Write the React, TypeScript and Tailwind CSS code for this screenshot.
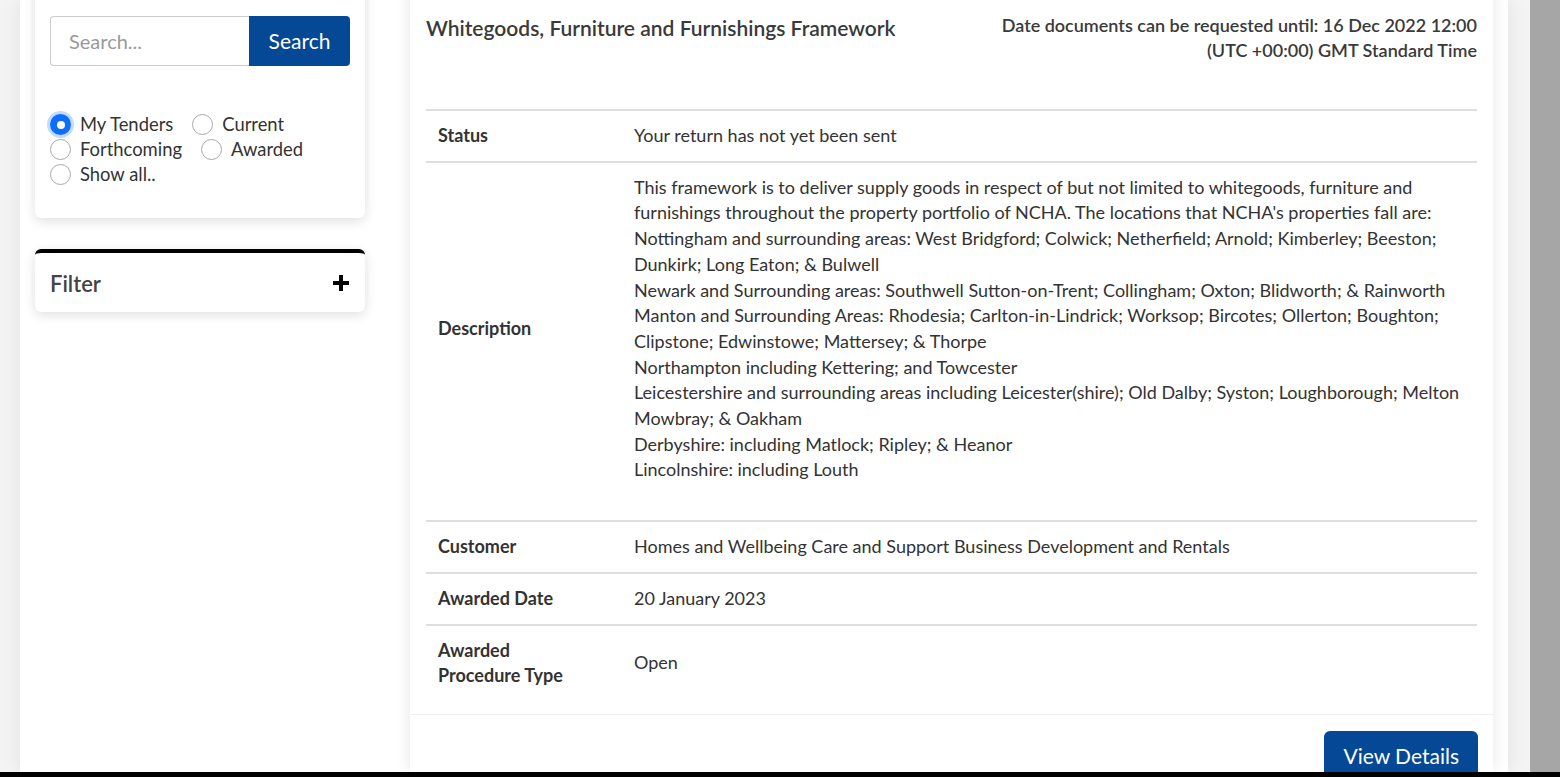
import React from 'react';

const rows: { label: string; value: React.ReactNode; extra?: string }[] = [
  { label: 'Status', value: 'Your return has not yet been sent' },
  {
    label: 'Description',
    extra: 'pb-[37px]',
    value: (
      <>
        This framework is to deliver supply goods in respect of but not limited to whitegoods, furniture and furnishings
        throughout the property portfolio of NCHA. The locations that NCHA's properties fall are:
        <br />
        Nottingham and surrounding areas: West Bridgford; Colwick; Netherfield; Arnold; Kimberley; Beeston; Dunkirk; Long
        Eaton; &amp; Bulwell
        <br />
        Newark and Surrounding areas: Southwell Sutton-on-Trent; Collingham; Oxton; Blidworth; &amp; Rainworth
        <br />
        Manton and Surrounding Areas: Rhodesia; Carlton-in-Lindrick; Worksop; Bircotes; Ollerton; Boughton; Clipstone;
        Edwinstowe; Mattersey; &amp; Thorpe
        <br />
        Northampton including Kettering; and Towcester
        <br />
        Leicestershire and surrounding areas including Leicester(shire); Old Dalby; Syston; Loughborough; Melton Mowbray;
        &amp; Oakham
        <br />
        Derbyshire: including Matlock; Ripley; &amp; Heanor
        <br />
        Lincolnshire: including Louth
      </>
    ),
  },
  { label: 'Customer', value: 'Homes and Wellbeing Care and Support Business Development and Rentals' },
  { label: 'Awarded Date', value: '20 January 2023' },
  { label: 'Awarded Procedure Type', value: 'Open' },
];

const filters = [
  { label: 'My Tenders', checked: true },
  { label: 'Current' },
  { label: 'Forthcoming' },
  { label: 'Awarded' },
  { label: 'Show all..' },
];

function Radio({ checked }: { checked?: boolean }) {
  return checked ? (
    <span className="w-[21px] h-[21px] rounded-full bg-[#0d6efd] flex items-center justify-center shadow-[0_0_0_3px_rgba(13,110,253,0.25)] shrink-0">
      <span className="w-[8px] h-[8px] rounded-full bg-white"></span>
    </span>
  ) : (
    <span className="w-[21px] h-[21px] rounded-full bg-white border border-[#a9a9a9] shrink-0"></span>
  );
}

export default function App() {
  return (
    <div className="h-screen overflow-hidden flex flex-col bg-[#f4f4f4] text-[#333] font-['Lato','Open_Sans',sans-serif]">
      <div className="flex-1 flex min-h-0">
        <div className="w-[1488px] ml-[20px] bg-white shadow-[0_0_20px_rgba(0,0,0,0.08)] flex gap-[45px] px-[15px] overflow-hidden">
          {/* Sidebar */}
          <div className="w-[330px] shrink-0 flex flex-col gap-[31px]">
            <div className="-mt-[20px] pt-[36px] pb-[31px] px-[15px] bg-white rounded-b-[6px] shadow-[0_3px_12px_rgba(0,0,0,0.13)]">
              <div className="flex h-[50px]">
                <div className="flex-1 border border-[#ccc] border-r-0 rounded-l-[4px] flex items-center px-[18px] text-[20px] text-[#9a9a9a]">
                  Search...
                </div>
                <button className="w-[101px] bg-[#044896] text-white text-[21px] rounded-r-[4px]">Search</button>
              </div>
              <div className="mt-[46px] flex flex-wrap gap-x-[19px] text-[18.4px] leading-[25px]">
                {filters.map((f) => (
                  <label key={f.label} className="flex items-center gap-[9px]">
                    <Radio checked={f.checked} />
                    <span>{f.label}</span>
                  </label>
                ))}
              </div>
            </div>

            <div className="bg-white rounded-[6px] border-t-[4px] border-black shadow-[0_3px_12px_rgba(0,0,0,0.13)] flex items-center justify-between px-[15px] h-[63px]">
              <span className="text-[22px] font-semibold text-[#444] pt-[2px]">Filter</span>
              <svg width="16" height="16" viewBox="0 0 16 16" className="mr-[1px]">
                <rect x="6" y="0" width="4" height="16" fill="#000" />
                <rect x="0" y="6" width="16" height="4" fill="#000" />
              </svg>
            </div>
          </div>

          {/* Main card */}
          <div className="w-[1083px] shrink-0 -mt-[20px] bg-white shadow-[0_0_15px_rgba(0,0,0,0.1)] flex flex-col">
            <div className="px-[16px] pt-[33px]">
              <div className="flex justify-between items-start">
                <h2 className="text-[21px] font-semibold text-[#3a3a3a] leading-[30px]">
                  Whitegoods, Furniture and Furnishings Framework
                </h2>
                <div className="text-right text-[18px] font-semibold text-[#3a3a3a] leading-[25px]">
                  Date documents can be requested until: 16 Dec 2022 12:00
                  <br />
                  (UTC +00:00) GMT Standard Time
                </div>
              </div>

              <div className="mt-[46px] mb-[13px] text-[18px] leading-[25.7px]">
                {rows.map((r) => (
                  <div key={r.label} className="grid grid-cols-[196px_1fr] border-t-2 border-[#dedede]">
                    <div className={`pl-[12px] pr-[40px] py-[12px] font-bold self-center ${r.extra ?? ''}`}>{r.label}</div>
                    <div className={`px-[12px] py-[12px] self-center ${r.extra ?? ''}`}>{r.value}</div>
                  </div>
                ))}
              </div>
            </div>

            <div className="border-t border-[#efefef] px-[15px] pt-[16px] flex justify-end">
              <button className="h-[50px] px-[19px] bg-[#044896] text-white text-[21px] rounded-[6px]">View Details</button>
            </div>
          </div>
        </div>
        <div className="flex-1"></div>
        <div className="w-[30px] bg-[#a6a6a6]"></div>
      </div>
      <div className="h-[5px] bg-black shrink-0"></div>
    </div>
  );
}
